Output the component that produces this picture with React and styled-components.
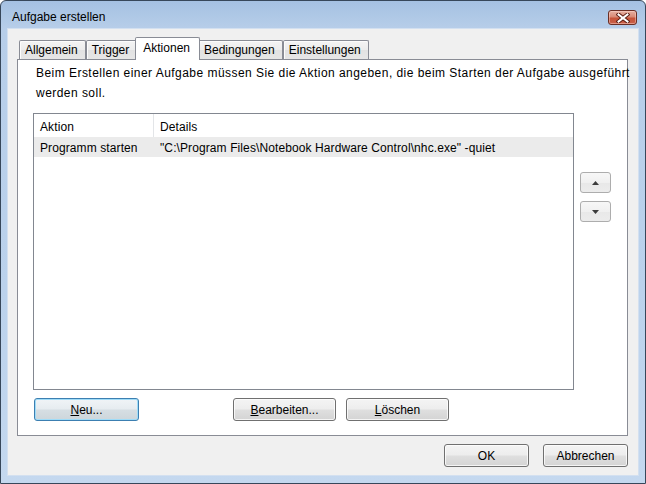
import React from 'react';
import styled, { createGlobalStyle, css } from 'styled-components';

const Global = createGlobalStyle`
  html, body { margin: 0; padding: 0; background: #fff; }
  body { font-family: "Liberation Sans", Arial, sans-serif; font-size: 12px; color: #000; }
  * { box-sizing: border-box; }
`;

const Window = styled.div`
  width: 646px;
  height: 484px;
  border: 1px solid #37475a;
  border-radius: 6px 6px 0 0;
  background: linear-gradient(180deg, #a5c1e2 0px, #b7cee9 28px, #bbd2ec 60%, #c4d8ef 100%);
  display: flex;
  flex-direction: column;
  overflow: hidden;
`;

const TitleBar = styled.div`
  height: 27px;
  flex: none;
  display: flex;
  align-items: flex-start;
`;

const Title = styled.div`
  margin: 9px 0 0 11px;
  font-size: 12px;
  color: #000;
`;

const CloseButton = styled.div`
  margin: 9px 8px 0 auto;
  width: 29px;
  height: 15px;
  border: 1px solid #6a2e24;
  border-radius: 3px;
  background: linear-gradient(180deg, #e6b0a2 0%, #d98a76 45%, #c65338 55%, #c8604a 100%);
  box-shadow: inset 0 0 0 1px rgba(255, 220, 210, 0.45);
  display: flex;
  align-items: center;
  justify-content: center;
`;

const Client = styled.div`
  flex: 1;
  margin: 0 6px 7px 6px;
  border: 1px solid #d3e0f0;
  background: #f0f0f0;
  padding: 8px 10px 8px 9px;
  display: flex;
  flex-direction: column;
  min-height: 0;
`;

const TabControl = styled.div`
  flex: 1;
  display: flex;
  flex-direction: column;
  min-height: 0;
`;

const TabStrip = styled.div`
  height: 23px;
  margin-bottom: -1px;
  padding-left: 2px;
  display: flex;
  align-items: flex-start;
  position: relative;
  z-index: 1;
`;

const Tab = styled.div`
  height: 19px;
  margin-top: 3px;
  padding: 2px 7px 0 5px;
  line-height: 15px;
  border: 1px solid #898c95;
  border-bottom: none;
  border-radius: 2px 2px 0 0;
  background: linear-gradient(180deg, #f4f4f4 0%, #ececec 50%, #e2e2e2 51%, #e6e6e6 100%);
  box-shadow: inset 1px 1px 0 #fcfcfc;
  white-space: nowrap;
  ${p => p.$active && css`
    position: relative;
    z-index: 2;
    height: 23px;
    margin: 0 -2px;
    padding: 3px 9px 0 7px;
    background: #fff;
    box-shadow: none;
  `}
`;

const Panel = styled.div`
  flex: 1;
  border: 1px solid #898c95;
  background: #fff;
  padding: 3px 16px 14px 15px;
  display: flex;
  flex-direction: column;
  min-height: 0;
`;

const Description = styled.p`
  margin: 0 0 10px 3px;
  line-height: 20px;
  height: 40px;
  letter-spacing: 0.46px;
  white-space: nowrap;
`;

const ListArea = styled.div`
  flex: 1;
  display: flex;
  gap: 6px;
  min-height: 0;
`;

const ListView = styled.div`
  flex: 1;
  border: 1px solid #828790;
  background: #fff;
  display: flex;
  flex-direction: column;
`;

const HeaderRow = styled.div`
  height: 23px;
  display: flex;
  background: #fff;
`;

const HeaderCell = styled.div`
  width: ${p => (p.$w ? `${p.$w}px` : 'auto')};
  flex: ${p => (p.$w ? 'none' : '1')};
  padding: 6px 0 0 6px;
  line-height: 15px;
  letter-spacing: 0.1px;
  border-right: ${p => (p.$w ? '1px solid #e3e5e8' : 'none')};
`;

const Row = styled.div`
  height: 20px;
  display: flex;
  background: ${p => (p.$selected ? '#ebebeb' : 'transparent')};
`;

const Cell = styled.div`
  width: ${p => (p.$w ? `${p.$w}px` : 'auto')};
  flex: ${p => (p.$w ? 'none' : '1')};
  padding: 4px 0 0 6px;
  line-height: 15px;
  letter-spacing: 0.1px;
  white-space: nowrap;
`;

const SideColumn = styled.div`
  width: 31px;
  padding-top: 59px;
  display: flex;
  flex-direction: column;
  gap: 8px;
`;

const SmallButton = styled.div`
  width: 31px;
  height: 21px;
  border: 1px solid #adadad;
  border-radius: 3px;
  background: linear-gradient(180deg, #f7f7f7 0%, #f0f0f0 50%, #e8e8e8 51%, #ececec 100%);
  display: flex;
  align-items: center;
  justify-content: center;
`;

const ButtonRow = styled.div`
  height: 23px;
  margin-top: 8px;
  display: flex;
  gap: 10px;
  padding-left: 1px;
`;

const DialogButtons = styled.div`
  height: 23px;
  margin-top: 8px;
  display: flex;
  justify-content: flex-end;
  gap: 14px;
`;

const Button = styled.div`
  width: ${p => p.$w}px;
  height: 23px;
  margin-left: ${p => p.$ml || 0}px;
  border: 1px solid #707070;
  border-radius: 3px;
  background: linear-gradient(180deg, #f4f4f4 0%, #ededed 48%, #dfdfdf 52%, #d4d4d4 100%);
  box-shadow: inset 0 0 0 1px rgba(255, 255, 255, 0.75);
  display: flex;
  align-items: center;
  justify-content: center;
  line-height: 15px;
  padding-top: 1px;
  ${p => p.$default && css`
    border-color: #3c7fb1;
    box-shadow: inset 0 0 0 1px #9fdcf8;
    background: linear-gradient(180deg, #f0f4f7 0%, #e6ecf0 48%, #d6dee3 52%, #cdd6db 100%);
  `}
`;

const Ul = styled.span`
  text-decoration: underline;
`;

export default function App() {
  return (
    <>
      <Global />
      <Window>
        <TitleBar>
          <Title>Aufgabe erstellen</Title>
          <CloseButton>
            <svg width="14" height="10" viewBox="0 0 14 10">
              <path d="M2.5 1.5 L11.5 8.5 M11.5 1.5 L2.5 8.5" stroke="#5a1e14" strokeWidth="4" strokeLinecap="square" />
              <path d="M2.5 1.5 L11.5 8.5 M11.5 1.5 L2.5 8.5" stroke="#fff" strokeWidth="2" strokeLinecap="square" />
            </svg>
          </CloseButton>
        </TitleBar>
        <Client>
          <TabControl>
            <TabStrip>
              <Tab>Allgemein</Tab>
              <Tab>Trigger</Tab>
              <Tab $active>Aktionen</Tab>
              <Tab>Bedingungen</Tab>
              <Tab>Einstellungen</Tab>
            </TabStrip>
            <Panel>
              <Description>
                Beim Erstellen einer Aufgabe müssen Sie die Aktion angeben, die beim Starten der Aufgabe ausgeführt
                <br />
                werden soll.
              </Description>
              <ListArea>
                <ListView>
                  <HeaderRow>
                    <HeaderCell $w={120}>Aktion</HeaderCell>
                    <HeaderCell>Details</HeaderCell>
                  </HeaderRow>
                  <Row $selected>
                    <Cell $w={120}>Programm starten</Cell>
                    <Cell>"C:\Program Files\Notebook Hardware Control\nhc.exe" -quiet</Cell>
                  </Row>
                </ListView>
                <SideColumn>
                  <SmallButton>
                    <svg width="7" height="4" viewBox="0 0 7 4"><path d="M3.5 0 L7 4 L0 4 Z" fill="#3c3c3c" /></svg>
                  </SmallButton>
                  <SmallButton>
                    <svg width="7" height="4" viewBox="0 0 7 4"><path d="M0 0 L7 0 L3.5 4 Z" fill="#3c3c3c" /></svg>
                  </SmallButton>
                </SideColumn>
              </ListArea>
              <ButtonRow>
                <Button $w={105} $default><Ul>N</Ul>eu...</Button>
                <Button $w={103} $ml={84}><Ul>B</Ul>earbeiten...</Button>
                <Button $w={103}><Ul>L</Ul>öschen</Button>
              </ButtonRow>
            </Panel>
          </TabControl>
          <DialogButtons>
            <Button $w={85}>OK</Button>
            <Button $w={85}>Abbrechen</Button>
          </DialogButtons>
        </Client>
      </Window>
    </>
  );
}
